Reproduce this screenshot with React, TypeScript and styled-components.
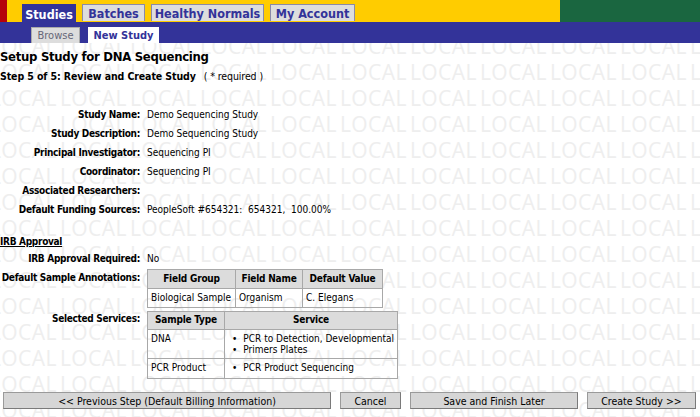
import { FC } from "react";
import styled, { createGlobalStyle } from "styled-components";

const GlobalStyle = createGlobalStyle`
  html, body {
    margin: 0;
    padding: 0;
    background: #fff;
  }
  body {
    font-family: "DejaVu Sans Condensed", "DejaVu Sans", sans-serif;
    font-size: 10px;
    color: #000;
  }
`;

const Page = styled.div`
  width: 700px;
  height: 417px;
  overflow: hidden;
  display: flex;
  flex-direction: column;
`;

const TopBar = styled.div`
  display: flex;
  height: 22px;
  flex-shrink: 0;
`;

const RedStrip = styled.div`
  width: 7px;
  background: #b5000b;
`;

const YellowArea = styled.div`
  flex: 1;
  background: #ffcc00;
  display: flex;
  align-items: flex-end;
  gap: 6px;
  padding-left: 15px;
`;

const GreenArea = styled.div`
  width: 140px;
  background: #1a6640;
`;

const Tab = styled.div<{ $active?: boolean; $w: number }>`
  width: ${(p) => p.$w}px;
  height: ${(p) => (p.$active ? 18 : 17)}px;
  box-sizing: border-box;
  display: flex;
  align-items: center;
  justify-content: center;
  padding-top: 1px;
  font-weight: bold;
  font-size: 12.5px;
  color: ${(p) => (p.$active ? "#fff" : "#333399")};
  background: ${(p) => (p.$active ? "#333399" : "#dddddd")};
  border: 1px solid ${(p) => (p.$active ? "#333399" : "#8a8aa8")};
  border-bottom: none;
  margin-bottom: ${(p) => (p.$active ? 0 : 1)}px;
`;

const SubBar = styled.div`
  height: 21px;
  flex-shrink: 0;
  background: #333399;
  display: flex;
  align-items: flex-end;
  gap: 8px;
  padding-left: 31px;
`;

const SubTab = styled.div<{ $active?: boolean; $w: number }>`
  width: ${(p) => p.$w}px;
  height: 16px;
  box-sizing: border-box;
  display: flex;
  align-items: center;
  justify-content: center;
  font-weight: ${(p) => (p.$active ? "bold" : "normal")};
  font-size: 11px;
  color: ${(p) => (p.$active ? "#333399" : "#666677")};
  background: ${(p) => (p.$active ? "#fff" : "#dddddd")};
  border: 1px solid ${(p) => (p.$active ? "#fff" : "#aaaaaa")};
  border-bottom: none;
`;

const Main = styled.div`
  position: relative;
  flex: 1;
  overflow: hidden;
  padding-top: 5px;
`;

/* faint repeated "LOCAL" watermark behind the page */
const Watermark = styled.div`
  position: absolute;
  top: -10px;
  left: -10px;
  z-index: 0;
  pointer-events: none;
  user-select: none;
`;

const WatermarkRow = styled.div`
  display: flex;
  height: 26px;
  line-height: 26px;
  white-space: nowrap;
`;

const WatermarkWord = styled.span`
  flex: 0 0 70px;
  font-family: "Open Sans", sans-serif;
  font-size: 21px;
  letter-spacing: 0.4px;
  color: #eeeeee;
`;

const Content = styled.div`
  position: relative;
  z-index: 1;
`;

const Title = styled.h1`
  margin: 0;
  font-size: 13px;
  letter-spacing: -0.3px;
  line-height: 18px;
  font-weight: bold;
`;

const StepLine = styled.div`
  margin-top: 3px;
  font-size: 10.5px;
  letter-spacing: -0.1px;
  line-height: 14px;
  font-weight: bold;
`;

const Required = styled.span`
  font-weight: normal;
  margin-left: 8px;
`;

const Fields = styled.div<{ $gap: number }>`
  display: grid;
  grid-template-columns: 140px auto;
  column-gap: 7px;
  row-gap: ${(p) => p.$gap}px;
  align-items: start;
  justify-items: start;
  line-height: 14px;
`;

const Label = styled.div<{ $pad?: number }>`
  justify-self: end;
  text-align: right;
  font-weight: bold;
  letter-spacing: -0.3px;
  white-space: nowrap;
  padding-top: ${(p) => p.$pad ?? 0}px;
`;

const Value = styled.div`
  white-space: pre;
`;

const SectionHead = styled.div`
  font-weight: bold;
  letter-spacing: -0.3px;
  text-decoration: underline;
  line-height: 14px;
  margin: 18px 0 3px;
`;

const DataTable = styled.table<{ $slimHead?: boolean }>`
  border-collapse: collapse;
  border: 1px solid #8c8c8c;
  background: transparent;
  font-size: 10px;

  th,
  td {
    border: 1px solid #a8a8a8;
    padding: 2px 3px;
    line-height: 14px;
    text-align: left;
    vertical-align: top;
    white-space: nowrap;
    box-sizing: content-box;
  }

  th {
    background: #dcdcdc;
    text-align: center;
    font-weight: bold;
    letter-spacing: -0.2px;
    padding-top: ${(p) => (p.$slimHead ? 1 : 2)}px;
  }
`;

const ServiceList = styled.ul`
  margin: 0;
  padding: 0 0 0 4px;
  list-style: none;
`;

const ServiceItem = styled.li<{ $tall?: boolean }>`
  display: flex;
  gap: 6px;
  line-height: ${(p) => (p.$tall ? 14 : 11)}px;
`;

const Buttons = styled.div`
  display: grid;
  grid-template-columns: 328px 61px 168px 109px;
  column-gap: 9px;
  padding-left: 3px;
  margin-top: 13px;
`;

const Button = styled.button`
  height: 17px;
  padding: 0;
  font-family: inherit;
  font-size: 10.5px;
  color: #000;
  background: #d6d6d6;
  border: 1px solid #9a9a9a;
  border-right-color: #7a7a7a;
  border-bottom-color: #7a7a7a;
  cursor: pointer;
`;

const details: [string, string][] = [
  ["Study Name:", "Demo Sequencing Study"],
  ["Study Description:", "Demo Sequencing Study"],
  ["Principal Investigator:", "Sequencing PI"],
  ["Coordinator:", "Sequencing PI"],
  ["Associated Researchers:", ""],
  ["Default Funding Sources:", "PeopleSoft #654321:  654321,  100.00%"],
];

const tabs = [
  { label: "Studies", w: 54, active: true },
  { label: "Batches", w: 63 },
  { label: "Healthy Normals", w: 113 },
  { label: "My Account", w: 85 },
];

const WATERMARK_ROWS = Array.from({ length: 15 });
const WATERMARK_COLS = Array.from({ length: 11 });

export default function App() {
  return (
    <>
      <GlobalStyle />
      <Page>
        <TopBar>
          <RedStrip />
          <YellowArea>
            {tabs.map((t) => (
              <Tab key={t.label} $w={t.w} $active={t.active}>
                {t.label}
              </Tab>
            ))}
          </YellowArea>
          <GreenArea />
        </TopBar>
        <SubBar>
          <SubTab $w={49}>Browse</SubTab>
          <SubTab $w={71} $active>
            New Study
          </SubTab>
        </SubBar>
        <Main>
          <Watermark aria-hidden>
            {WATERMARK_ROWS.map((_, r) => (
              <WatermarkRow key={r}>
                {WATERMARK_COLS.map((_, c) => (
                  <WatermarkWord key={c}>LOCAL</WatermarkWord>
                ))}
              </WatermarkRow>
            ))}
          </Watermark>
          <Content>
            <Title>Setup Study for DNA Sequencing</Title>
            <StepLine>
              Step 5 of 5: Review and Create Study
              <Required>( * required )</Required>
            </StepLine>

            <Fields $gap={5} style={{ marginTop: 25 }}>
              {details.map(([label, value]) => (
                <FieldRow key={label} label={label} value={value} />
              ))}
            </Fields>

            <SectionHead>IRB Approval</SectionHead>
            <Fields $gap={3}>
              <Label>IRB Approval Required:</Label>
              <Value>No</Value>

              <Label $pad={2}>Default Sample Annotations:</Label>
              <DataTable>
                <thead>
                  <tr>
                    <th style={{ width: 81 }}>Field Group</th>
                    <th style={{ width: 60 }}>Field Name</th>
                    <th style={{ width: 73 }}>Default Value</th>
                  </tr>
                </thead>
                <tbody>
                  <tr>
                    <td>Biological Sample</td>
                    <td>Organism</td>
                    <td>C. Elegans</td>
                  </tr>
                </tbody>
              </DataTable>

              <Label $pad={1}>Selected Services:</Label>
              <DataTable $slimHead>
                <thead>
                  <tr>
                    <th style={{ width: 70 }}>Sample Type</th>
                    <th style={{ width: 165 }}>Service</th>
                  </tr>
                </thead>
                <tbody>
                  <tr>
                    <td style={{ padding: "2px 3px 3px" }}>DNA</td>
                    <td style={{ padding: "3px 3px 3px" }}>
                      <ServiceList>
                        <ServiceItem>
                          <span>•</span>PCR to Detection, Developmental
                        </ServiceItem>
                        <ServiceItem>
                          <span>•</span>Primers Plates
                        </ServiceItem>
                      </ServiceList>
                    </td>
                  </tr>
                  <tr>
                    <td style={{ paddingBottom: 3 }}>PCR Product</td>
                    <td style={{ paddingBottom: 3 }}>
                      <ServiceList>
                        <ServiceItem $tall>
                          <span>•</span>PCR Product Sequencing
                        </ServiceItem>
                      </ServiceList>
                    </td>
                  </tr>
                </tbody>
              </DataTable>
            </Fields>

            <Buttons>
              <Button>&lt;&lt; Previous Step (Default Billing Information)</Button>
              <Button>Cancel</Button>
              <Button>Save and Finish Later</Button>
              <Button>Create Study &gt;&gt;</Button>
            </Buttons>
          </Content>
        </Main>
      </Page>
    </>
  );
}

const FieldRow: FC<{ label: string; value: string }> = ({ label, value }) => (
  <>
    <Label>{label}</Label>
    <Value>{value}</Value>
  </>
);
